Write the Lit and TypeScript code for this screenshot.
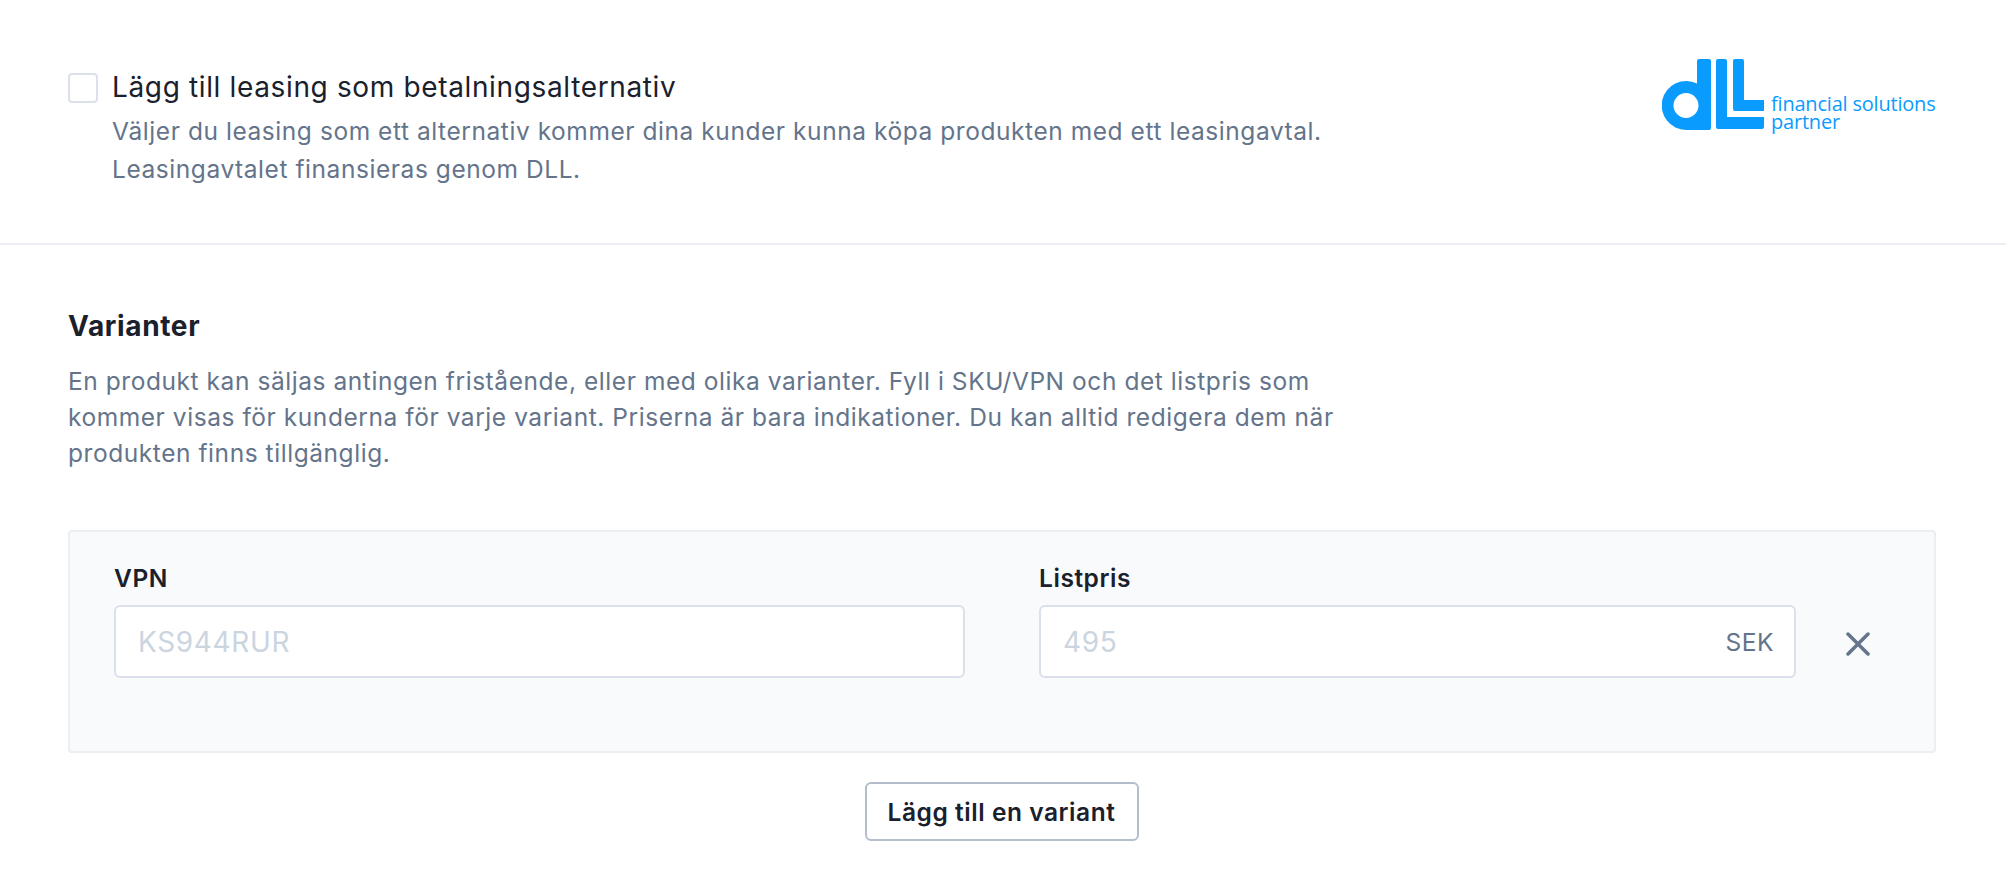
import { LitElement, html, css } from "lit";
import { customElement } from "lit/decorators.js";

@customElement("app-root")
export class AppRoot extends LitElement {
  static styles = css`
    :host { display: block; width: 2006px; height: 894px; background: #fff; font-family: Inter, "Liberation Sans", sans-serif; font-optical-sizing: none; color: #1a202c; overflow: hidden; }
    .top { display: flex; justify-content: space-between; align-items: flex-start; height: 245px; box-sizing: border-box; padding: 70px 70px 0 68px; border-bottom: 2px solid #ebeef2; }
    .lease { display: flex; gap: 14px; }
    .check { width: 30px; height: 30px; box-sizing: border-box; border: 2px solid #dae1ea; border-radius: 4px; margin-top: 3px; flex: none; background: #fff; }
    .lease-title { font-size: 28px; line-height: 34px; letter-spacing: 0.64px; }
    .desc { font-size: 24.5px; line-height: 36px; letter-spacing: 0.56px; color: #64748b; }
    .lease .desc { line-height: 38px; margin-top: 8px; }
    .logo { display: flex; align-items: flex-start; margin-top: -11px; margin-right: -1px; }
    .logo svg { display: block; flex: none; }
    .logo-text { width: 166px; margin-left: 5px; margin-top: 36px; font-family: "Open Sans", sans-serif; font-size: 20px; line-height: 18px; color: #0a9bff; letter-spacing: -0.2px; white-space: nowrap; }
    .variants { padding: 0 70px 0 68px; }
    h2 { margin: 0; padding-top: 63px; font-size: 28px; line-height: 36px; font-weight: 700; letter-spacing: 0.64px; }
    .variants .desc { margin-top: 19px; width: 1300px; }
    .panel { margin-top: 59px; height: 223px; box-sizing: border-box; background: #f8fafc; border: 2px solid #ebeef2; border-radius: 4px; padding: 30px 0 0 44px; display: flex; align-items: flex-start; }
    .field { display: flex; flex-direction: column; }
    .field.vpn { width: 851px; margin-right: 74px; }
    .field.price { width: 757px; }
    label { font-size: 24.5px; line-height: 33px; font-weight: 600; margin-bottom: 10px; letter-spacing: 0.56px; }
    .input { height: 73px; box-sizing: border-box; background: #fff; border: 2px solid #dae1ea; border-radius: 6px; display: flex; align-items: center; justify-content: space-between; padding: 0 20px 0 22px; font-size: 28px; letter-spacing: 0.64px; color: #cbd5e0; }
    .unit { font-size: 24.5px; letter-spacing: 0.56px; color: #64748b; }
    .remove { width: 24px; height: 24px; margin: 70px 0 0 50px; color: #64748b; flex: none; }
    .actions { display: flex; justify-content: center; margin-top: 29px; padding-right: 1px; }
    button { width: 274px; height: 59px; box-sizing: border-box; background: #fff; border: 2px solid #b4bdcb; border-radius: 6px; font: 600 24.5px Inter, sans-serif; font-optical-sizing: none; letter-spacing: 0.56px; color: #1a202c; padding: 0; }
  `;

  render() {
    return html`
      <div class="top">
        <div class="lease">
          <div class="check"></div>
          <div>
            <div class="lease-title">Lägg till leasing som betalningsalternativ</div>
            <div class="desc">Väljer du leasing som ett alternativ kommer dina kunder kunna köpa produkten med ett leasingavtal.<br />Leasingavtalet finansieras genom DLL.</div>
          </div>
        </div>
        <div class="logo">
          <svg width="104" height="72" viewBox="0 0 104 72" fill="#0a9bff">
            <path fill-rule="evenodd" d="M38 0h10a2 2 0 0 1 2 2v67a2 2 0 0 1-2 2H25a24.500 24.500 0 1 1 11-46.500V2a2 2 0 0 1 2-2zM25 34a12.500 12.500 0 1 0 0 25a12.500 12.500 0 0 0 0-25z" transform="translate(-1 0)"/>
            <path d="M56 0h7a2 2 0 0 1 2 2v56h37v10a2 2 0 0 1-2 2H56a2 2 0 0 1-2-2V2a2 2 0 0 1 2-2z"/>
            <path d="M73 0h7a2 2 0 0 1 2 2v39h20v11H73a2 2 0 0 1-2-2V2a2 2 0 0 1 2-2z"/>
          </svg>
          <div class="logo-text">financial solutions<br />partner</div>
        </div>
      </div>
      <div class="variants">
        <h2>Varianter</h2>
        <div class="desc">En produkt kan säljas antingen fristående, eller med olika varianter. Fyll i SKU/VPN och det listpris som kommer visas för kunderna för varje variant. Priserna är bara indikationer. Du kan alltid redigera dem när produkten finns tillgänglig.</div>
        <div class="panel">
          <div class="field vpn">
            <label>VPN</label>
            <div class="input">KS944RUR</div>
          </div>
          <div class="field price">
            <label>Listpris</label>
            <div class="input"><span>495</span><span class="unit">SEK</span></div>
          </div>
          <svg class="remove" viewBox="0 0 24 24" fill="none" stroke="currentColor" stroke-width="3.500" stroke-linecap="round"><path d="M2 2 L22 22 M22 2 L2 22"/></svg>
        </div>
        <div class="actions"><button>Lägg till en variant</button></div>
      </div>
    `;
  }
}
